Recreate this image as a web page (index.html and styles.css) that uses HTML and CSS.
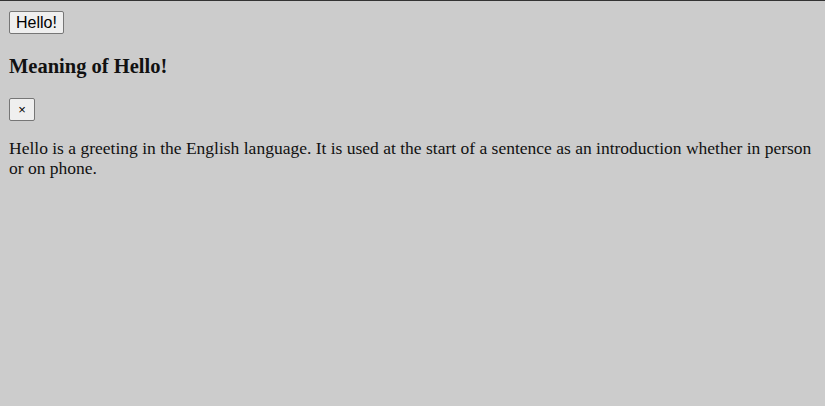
FILE: index.html
```html
<!DOCTYPE html>
<html lang="en">
<head>
<meta charset="UTF-8">
<title>Hello</title>
<link rel="stylesheet" href="styles.css">
</head>
<body>

<button class="open-btn">Hello!</button>

<div class="modal">
    <h3 class="modal-title">Meaning of Hello!</h3>
    <button class="close-btn">&times;</button>
    <p class="modal-text">Hello is a greeting in the English language. It is used at the start of a sentence as an introduction whether in person or on phone.</p>
</div>

</body>
</html>
```

FILE: styles.css
```css
html {
    background: #cccccc;
    border-top: 1px solid #333333;
}

body {
    font-family: "Liberation Serif", "Times New Roman", serif;
    font-size: 17.5px;
    color: #111111;
    margin: 0;
    padding: 10px 8px 8px 9px;
}

button {
    font-family: "Liberation Sans", Arial, sans-serif;
    background: #efefef;
    color: #000000;
    border: 1px solid #767676;
    border-radius: 2px;
    cursor: pointer;
}

.open-btn {
    font-size: 16px;
    width: 55px;
    height: 23px;
    padding: 0;
}

.modal-title {
    font-size: 20.5px;
    margin: 21px 0 20px;
}

.close-btn {
    font-size: 13px;
    width: 26px;
    height: 23px;
    padding: 0;
}

.modal-text {
    margin: 17px 0;
    line-height: 20px;
}
```
